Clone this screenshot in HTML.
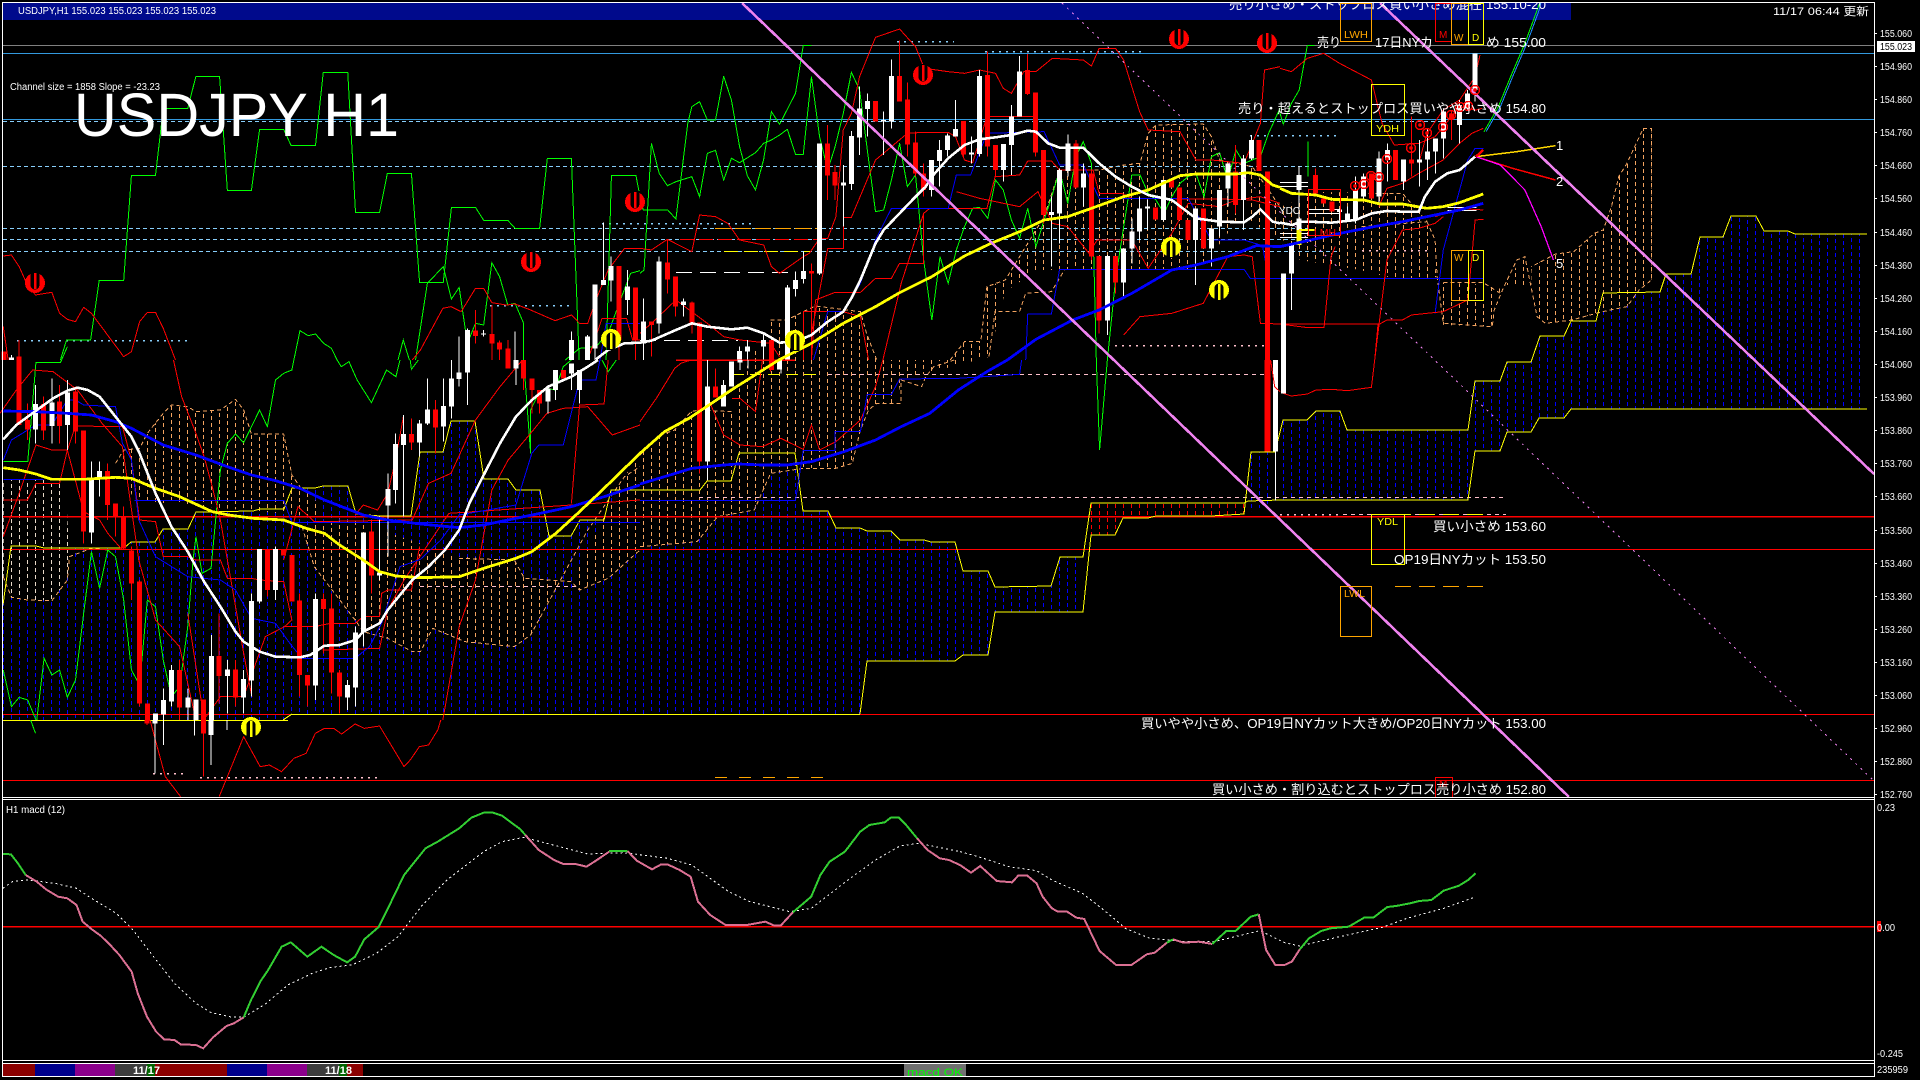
<!DOCTYPE html>
<html><head><meta charset="utf-8"><style>
html,body{margin:0;padding:0;background:#000;width:1920px;height:1080px;overflow:hidden}
svg{display:block;position:absolute;left:0;top:0}
svg *{vector-effect:non-scaling-stroke;shape-rendering:crispEdges}
.n{fill:none}
.g{fill:none;stroke:#0f0;stroke-width:1}
.r{fill:none;stroke:#f00;stroke-width:1}
.b{fill:none;stroke:#00f;stroke-width:1}
.y{fill:none;stroke:#ff0;stroke-width:1}
.w{fill:none;stroke:#fff;stroke-width:1}
.wb{fill:none;stroke:#fff;stroke-width:5}
.rb{fill:none;stroke:#f00;stroke-width:5}
.p{fill:none;stroke:#f4a460;stroke-width:1;stroke-dasharray:4 3}
.ma1{fill:none;stroke:#fff;stroke-width:2.6}
.ma2{fill:none;stroke:#ff0;stroke-width:2.8}
.ma3{fill:none;stroke:#00f;stroke-width:2.8}
.pk{fill:none;stroke:#db7093;stroke-width:2}
.gr{fill:none;stroke:#32cd32;stroke-width:2}
.dt{fill:none;stroke:#fff;stroke-width:1;stroke-dasharray:2 3}
text{font-family:"Liberation Sans","Noto Sans CJK JP",sans-serif;fill:#fff}
.j{font-size:13px}
.a{font-size:10px}
</style></head><body>
<svg width="1920" height="1080" viewBox="0 0 1920 1080" xmlns="http://www.w3.org/2000/svg">
<defs>
<pattern id="pb" patternUnits="userSpaceOnUse" x="3" y="0" width="24" height="7"><rect width="1" height="4" fill="#0000ff"/><rect x="8" y="1" width="1" height="4" fill="#0000ff"/><rect x="16" y="3" width="1" height="4" fill="#0000ff"/></pattern>
<pattern id="pp" patternUnits="userSpaceOnUse" x="3" y="0" width="24" height="7"><rect width="1" height="4" fill="#f4a460"/><rect x="8" y="1" width="1" height="4" fill="#f4a460"/><rect x="16" y="3" width="1" height="4" fill="#f4a460"/></pattern>
<pattern id="pw" patternUnits="userSpaceOnUse" x="3" y="0" width="24" height="7"><rect width="1" height="4" fill="#e8d8c8"/><rect x="8" y="1" width="1" height="4" fill="#e8d8c8"/><rect x="16" y="3" width="1" height="4" fill="#e8d8c8"/></pattern>
<pattern id="pr" patternUnits="userSpaceOnUse" x="3" y="0" width="8" height="7"><rect width="1" height="4" fill="#ff0000"/></pattern>
<clipPath id="c1"><polygon points="3,605 11,546 36,546 44,548 124,548 131,542 155,542 163,529 188,529 196,512 253,511 260,509 284,509 292,488 315,488 323,486 348,486 356,514 380,516 411,516 420,452 443,452 451,421 475,421 484,479 508,479 516,490 540,490 549,536 571,536 580,520 604,520 611,490 700,490 707,481 731,481 739,453 795,453 803,511 828,511 836,528 860,528 867,531 891,531 900,540 924,540 931,542 955,542 963,571 988,571 995,587 1051,586 1060,557 1083,557 1083,612 995,612 988,655 963,655 955,661 867,661 860,714 292,714 283,720 3,720"/></clipPath>
<clipPath id="c2"><polygon points="1244,514 1251,452 1275,452 1280,432 1283,420 1307,420 1316,411 1340,411 1347,430 1468,430 1475,381 1500,381 1507,362 1531,362 1540,336 1564,336 1571,321 1596,321 1603,293 1660,292 1666,274 1691,274 1700,237 1723,237 1731,216 1756,216 1764,231 1788,231 1795,234 1867,234 1867,409 1571,409 1564,418 1539,418 1531,432 1507,432 1500,451 1475,451 1468,500 1280,500"/></clipPath>
<clipPath id="c3"><polygon points="1091,503 1244,503 1244,514 1211,516 1156,516 1148,518 1123,518 1115,535 1091,535"/></clipPath>
<clipPath id="c4">
<polygon transform="translate(0,360) scale(.40816,.33333)" points="283,310 303,270 342,265 361,220 400,160 420,135 460,140 480,155 540,150 577,118 597,150 616,222 695,222 715,345 735,380 773,421 792,475 870,480 330,421"/>
<polygon transform="translate(0,360) scale(.40816,.33333)" points="740,500 860,480 1125,590 1260,600 1285,655 1375,665 1360,690 1300,825 1260,860 1140,845 1060,805 1030,875 1010,875 950,835 870,780 820,700 770,620"/>
<polygon points="624,477 640,455 660,435 675,430 691,412 699,410 732,412 745,370 771,320 787,320 803,312 815,306 852,312 866,333 877,360 950,360 964,342 981,342 987,287 1005,280 1020,257 1044,217 1060,170 1099,170 1124,165 1140,163 1148,133 1156,125 1203,124 1211,137 1220,160 1252,167 1280,207 1321,192 1402,193 1427,220 1437,277 1400,280 1360,270 1300,260 1283,240 1240,217 1200,270 1150,270 1100,270 1060,270 1037,270 1005,292 989,357 901,380 897,403 877,403 869,410 860,430 852,463 836,468 803,468 771,473 754,510 718,517 697,542 640,547 608,578 580,590 571,582"/>
<polygon transform="translate(1280,0) scale(.40816,.33333)" points="616,800 675,762 720,755 770,700 792,690 812,620 830,530 850,490 890,385 910,385 910,840 880,870 850,920 792,935 715,960 650,970 630,950"/>
<polygon transform="translate(1280,0) scale(.40816,.33333)" points="400,848 520,855 545,870 560,830 598,772 616,800 616,855 545,855 525,930 518,980 400,975 385,830"/>
</clipPath>
<clipPath id="c5"><polygon transform="translate(0,360) scale(.40816,.33333)" points="8,360 160,360 170,590 165,660 127,722 67,720 28,712 8,650"/></clipPath>
<g id="dn"><circle r="10" fill="#f00"/><path d="M-4.5-11V2A4.5 4.5 0 0 0 4.500 2V-11Z" fill="#000"/><path d="M0-10V6" stroke="#f00" stroke-width="2.500" fill="none"/></g>
<g id="up"><circle r="10" fill="#ff0"/><path d="M-4.5 11V-2A4.5 4.5 0 0 1 4.500-2V11Z" fill="#000"/><path d="M0 10V-6" stroke="#ff0" stroke-width="2.500" fill="none"/></g>
<g id="ring"><circle r="4.500" fill="none" stroke="#f00" stroke-width="1.500"/><circle r="1.800" fill="#f00"/></g>
</defs>
<rect width="1920" height="1080" fill="#000"/>
<rect x="3" y="3" width="1568" height="17" fill="#000a8c"/>
<!-- clouds -->
<rect x="0" y="0" width="1880" height="800" fill="url(#pb)" clip-path="url(#c1)"/>
<rect x="0" y="0" width="1880" height="800" fill="url(#pb)" clip-path="url(#c2)"/>
<rect x="0" y="0" width="1880" height="800" fill="url(#pr)" clip-path="url(#c3)"/>
<rect x="0" y="0" width="1880" height="800" fill="url(#pp)" clip-path="url(#c4)"/>
<rect x="0" y="0" width="1880" height="800" fill="url(#pw)" clip-path="url(#c5)"/>
<!-- peach contours -->
<g transform="translate(0,360) scale(.40816,.33333)">
<polyline class="p" points="283,310 303,270 342,265 361,220 400,160 420,135 460,140 480,155 540,150 577,118 597,150 616,222 695,222 715,345 735,380"/>
<polyline class="p" points="8,650 28,712 67,720 127,722 165,660 170,590 224,565 264,570"/>
<polyline class="p" points="740,500 770,620 820,700 870,780 890,815 950,835 1010,875 1030,875 1060,805 1140,845 1260,860 1300,825 1360,690 1440,510 1530,350 1568,320"/>
<polyline class="p" points="1125,595 1260,600 1285,655 1400,665 1420,690 1490,655 1568,570"/>
</g>
<g transform="translate(640,360) scale(.40816,.33333)">
<polyline class="p" points="0,285 50,225 85,210 125,155 145,150 225,155"/>
<polyline class="p" points="0,560 140,545 190,470 280,450 320,340 400,325 480,325 520,310 540,210 560,150 580,130 640,130 640,60 690,80 700,50 720,20 770,0"/>
</g>
<g transform="translate(640,0) scale(.40816,.33333)">
<polyline class="p" points="320,960 360,960 400,935 430,918 540,935 555,1000 580,1080"/>
<polyline class="p" points="760,1080 795,1025 835,1025 850,860 895,840 930,770 990,650 1028,510 1125,510 1185,495 1225,490 1245,400 1264,375 1380,372 1400,410 1420,480 1500,500 1568,620"/>
<polyline class="p" points="855,1070 870,935 930,935 945,880 1008,875 1040,810"/>
</g>
<g transform="translate(1280,0) scale(.40816,.33333)">
<polyline class="p" points="360,665 380,720 385,830 400,970 520,980 525,930 545,870 580,780 600,770 630,950 650,970 715,960 790,935 850,920 880,870 910,840 910,385 890,385 850,490 830,530 812,620 792,690 770,700 720,755 675,762 616,800"/>
<polyline class="p" points="400,848 498,848 540,880"/>
<polyline class="p" points="200,580 300,580 360,665"/>
<polyline class="p" points="200,680 360,665"/>
</g>
<!-- horizontal levels -->
<path d="M3 45.500H1874" stroke="#808080" fill="none"/>
<path d="M3 53.500H1874M3 119.500H1874" stroke="#3399dd" fill="none"/>
<path d="M3 121.500H1443M3 166.500H1382M3 228.500H1310M3 239.500H1308M3 251.500H1337" stroke="#87cefa" stroke-dasharray="4 3" fill="none"/>
<path d="M1250 135.500H1340M17 340.500H187M490 305.500H571M897 41.500H954M985 51.500H1146M602 223.500H754" stroke="#87cefa" stroke-width="1.500" stroke-dasharray="2 5" fill="none"/>
<path d="M3 516.500H1874" stroke="#f00" stroke-width="1.500" fill="none"/>
<path d="M3 549.500H1874M3 714.500H290M860 714.500H1874M3 780.500H1874" stroke="#f00" fill="none"/>
<path d="M715 228.500H820" stroke="#ffa500" stroke-dasharray="16 4" fill="none"/>
<path d="M680 239.500H820" stroke="#f00" stroke-dasharray="14 5" fill="none"/>
<path d="M724 251.500H811" stroke="#ff0" stroke-dasharray="14 6" fill="none"/>
<path d="M676 272.500H789" stroke="#fff" stroke-dasharray="16 8" fill="none"/>
<path d="M640 340.500H738" stroke="#fff" stroke-dasharray="16 8" fill="none"/>
<path d="M1115 345.500H1264M1362 250.500H1427" stroke="#ffc0cb" stroke-width="1.500" stroke-dasharray="2 5" fill="none"/>
<path d="M732 374.500H820" stroke="#ff0" stroke-dasharray="12 6" fill="none"/>
<path d="M828 374.500H1264M699 497.500H1506M1343 514.500H1506M420 586.500H580" stroke="#ffc0cb" stroke-dasharray="4 4" fill="none"/>
<path d="M1280 514.500H1340" stroke="#ffc0cb" stroke-width="1.500" stroke-dasharray="2 5" fill="none"/>
<path d="M153 773.500H187M200 777.500H380" stroke="#ffc0cb" stroke-width="1.500" stroke-dasharray="2 5" fill="none"/>
<path d="M715 777.500H827" stroke="#ffa500" stroke-dasharray="12 12" fill="none"/>
<path d="M1395 586.500H1483" stroke="#ffa500" stroke-dasharray="16 8" fill="none"/>
<path d="M1371 514.500H1483" stroke="#ff0" stroke-dasharray="16 8" fill="none"/>
<path d="M288 720.500H3" stroke="#ff0" fill="none"/>
<path d="M292 714.500H860" stroke="#ff0" stroke-width="1" fill="none"/>
<!-- ichimoku span lines -->
<polyline class="y" points="3,605 11,546 36,546 44,548 124,548 131,542 155,542 163,529 188,529 196,512 253,511 260,509 284,509 292,488 315,488 323,486 348,486 356,514 380,516 411,516 420,452 443,452 451,421 475,421 484,479 508,479 516,490 540,490 549,536 571,536 580,520 604,520 611,490 700,490 707,481 731,481 739,453 795,453 803,511 828,511 836,528 860,528 867,531 891,531 900,540 924,540 931,542 955,542 963,571 988,571 995,587 1051,586 1060,557 1083,557 1091,503 1244,503 1248,501 1280,500 1468,500 1475,451 1500,451 1507,432 1531,432 1539,418 1564,418 1571,409 1867,409"/>
<polyline class="y" points="860,714 867,661 955,661 963,655 988,655 995,612 1083,612 1091,535 1115,535 1123,518 1148,518 1156,516 1211,516 1244,514 1251,452 1275,452 1280,432 1283,420 1307,420 1316,411 1340,411 1347,430 1468,430 1475,381 1500,381 1507,362 1531,362 1540,336 1564,336 1571,321 1596,321 1603,293 1660,292 1666,274 1691,274 1700,237 1723,237 1731,216 1756,216 1764,231 1788,231 1795,234 1867,234"/>
<polyline class="y" points="283,720 292,714"/>
<!-- Zone 1 -->
<g transform="scale(.40816,.33333)">
<polyline class="g" points="148,1080 163,1020 222,1020 243,842 303,842 322,526 381,526 400,325 460,325 480,229 538,229 557,571 616,571 636,388 695,388 713,436 773,436 792,217 852,217 871,637 930,637 949,520 1008,520 1028,847 1086,847 1106,622 1165,622 1185,661 1244,661 1262,685 1322,685 1341,475 1400,475 1419,1080"/>
<polyline class="g" points="1485,1080 1498,526 1558,526 1568,590"/>
<polyline class="g" points="720,1080 735,992 755,1007 773,1002 793,1030 812,1045 826,1080"/>
<polyline class="g" points="975,1080 988,1020 1003,1080"/>
<polyline class="g" points="1018,1080 1047,850 1086,800 1106,897 1125,862 1145,1030 1165,970 1185,975 1205,788 1224,830 1244,915 1262,910 1283,970 1283,1080"/>
<polyline class="g" points="1385,1080 1420,1045 1460,1040 1490,1000 1520,900 1545,820 1568,812"/>
<polyline class="r" points="8,768 28,765 47,800 67,855 87,885 127,877 146,940 165,958 185,965 205,922 224,940 303,1070 322,1055 342,965 361,937 381,937 400,985 430,1080"/>
<polyline class="r" points="1010,1080 1030,1050 1085,925 1105,920 1130,935 1165,865 1185,865 1205,908 1240,915 1262,912 1300,930 1360,962 1400,945 1420,970 1440,970 1460,900 1490,810 1530,745 1568,745"/>
<polyline class="r" points="8,980 20,1080"/>
<polyline class="r" points="1440,1080 1475,955 1535,955 1550,1020 1568,1020"/>
<polyline class="b" points="1470,1080 1485,970 1568,970"/>
<path class="w" d="M1125 1010V1080M1262 995V1080M1400 995V1080M1439 1005V1080M1458 853V1080M1478 668V855M1497 770V905M1537 810V945M1145 985V1080M1185 990V1010M28 1065V1080"/>
<path class="wb" d="M1145 990V1080M1400 1020V1080M1439 1010V1080M1458 853V1045M1478 840V855M1497 798V842M1537 860V900M1185 1000V1004M28 1072V1080"/>
<path class="r" d="M1165 930V1030M1205 915V1080M1224 1022V1080M1244 1020V1080M1517 798V1080M1557 862V1080M47 1020V1080"/>
<path class="rb" d="M1165 992V1008M1205 1002V1030M1224 1028V1048M1244 1045V1080M1517 798V1020M1557 862V1020M47 1070V1080M10 1055V1080"/>
</g>
<!-- Zone 2 -->
<g transform="translate(640,0) scale(.40816,.33333)">
<polyline class="g" points="0,590 8,630 68,630 88,657 117,370 127,320 146,305 165,360 185,360 205,229 224,300 244,440 263,527 283,570 303,478 322,335 342,373 381,280 400,136 420,136"/>
<polyline class="g" points="0,820 10,810 28,430 47,520 67,557 88,545 127,530 146,590 165,460 185,451 205,540 224,475 244,488 283,458 303,430 322,420 342,405 361,388 381,463 400,463 420,230 440,410 460,510 478,440 498,340 518,217 538,270 558,460 577,635 597,630 616,540 636,430 655,560 675,525 695,780 715,960 735,770 755,850 775,750 795,680 815,625 832,622 852,655 871,540 890,570 910,660 930,715 950,625 970,740 990,660 1010,585 1028,510 1048,610 1068,470 1086,425 1106,490 1118,1080"/>
<polyline class="g" points="1145,1080 1165,840 1185,680 1205,525 1225,525 1245,580 1264,600 1284,640 1303,590 1323,550 1343,530 1362,520 1382,590 1400,470 1420,458 1440,540 1460,450 1480,490 1500,480 1520,470 1540,400 1568,325"/>
<polyline class="r" points="0,745 28,750 67,718 127,755 146,645 185,650 215,670 244,720 303,735 322,800 342,820 400,770 415,760 440,715 460,715 480,650 498,390 518,340 538,230 577,112 636,87 675,140 695,200 715,208 755,215 795,220 832,210 871,220 890,265 910,280 940,215 970,215 1010,175 1086,180 1106,198 1125,145 1165,145 1185,180 1205,260 1224,335 1245,390 1323,395 1362,480 1400,480 1480,490 1520,370 1530,210 1568,200"/>
<polyline class="r" points="595,1080 640,850 695,640 710,625 850,625 870,530 930,525 950,483 1008,483 1028,510 1110,510 1125,580 1180,580 1205,595 1460,598 1500,600 1568,620"/>
<polyline class="r" points="420,1080 430,900 478,877 540,877 577,835 616,835 636,790 695,790 695,640"/>
<polyline class="r" points="420,1000 460,745 498,745 498,652 518,652 577,480 616,440 655,400 695,397 755,397 773,410 795,480 815,488 850,350 965,350"/>
<polyline class="r" points="400,1080 400,935 498,935 540,950 560,1080"/>
<polyline class="r" points="0,1000 28,970 88,900 165,970 205,1010 245,1020 320,1030 342,1070"/>
<polyline class="r" points="775,575 832,595 871,605 930,620 975,575 1010,670 1048,680 1100,760 1120,720 1205,720 1245,805 1303,700 1343,610 1420,620 1460,600 1520,590 1568,610"/>
<polyline class="r" points="1185,1005 1225,950 1303,940 1380,910 1440,770 1480,765 1500,770 1520,970 1568,972"/>
<polyline class="b" points="425,1080 460,935 498,935 540,850 577,720 616,625 755,625 775,525 810,525 850,400 990,395 1028,495 1086,495 1125,595 1343,595 1400,720 1480,720 1525,737 1540,835 1568,835"/>
<polyline class="b" points="945,1080 950,942 1008,942 1028,808 1480,808 1495,835 1568,835"/>
<path class="w" d="M8 895V1080M47 770V1000M107 895V950M244 1040V1080M263 1020V1080M303 1000V1080M361 855V1080M381 815V890M400 755V850M440 430V825M498 495V680M518 393V570M538 260V465M557 280V410M597 335V465M616 178V385M714 480V590M734 420V560M753 400V470M773 300V410M812 410V490M832 210V470M890 432V545M910 315V525M930 168V350M1008 590V800M1028 505V730M1048 403V530M1087 490V620M1145 765V1005M1184 745V890M1205 655V790M1224 590V720M1243 600V690M1282 540V665M1361 625V855M1400 685V800M1420 570V710M1440 490V620M1478 465V690M1498 405V480"/>
<path class="wb" d="M8 965V1030M47 785V970M107 905V915M244 1053V1080M263 1040V1055M303 1020V1040M361 863V1080M381 840V867M400 813V837M440 430V820M498 547V557M518 408V552M538 325V413M557 303V327M597 360V365M616 228V364M714 480V570M734 450V483M753 407V450M773 387V410M812 458V463M832 228V462M890 432V510M910 350V435M930 215V350M1008 636V645M1028 510V640M1048 430V513M1087 520V563M1145 768V962M1184 745V848M1205 695V745M1224 625V695M1243 620V625M1282 540V660M1361 625V720M1400 685V745M1420 570V680M1440 490V565M1478 475V600M1498 420V475"/>
<path class="r" d="M28 965V1070M67 720V880M87 830V950M127 905V1000M420 790V1080M459 375V600M478 495V600M636 122V305M655 247V470M675 395V530M695 490V590M792 363V470M851 155V470M871 435V530M949 162V285M969 277V470M989 450V670M1068 420V565M1106 510V780M1125 768V1000M1165 768V880M1459 435V640"/>
<path class="rb" d="M28 965V975M67 787V838M87 830V920M127 908V970M146 968V1080M322 1020V1080M420 813V821M459 430V527M478 516V557M577 303V365M636 228V305M655 298V433M675 427V520M695 520V570M792 363V463M851 225V440M871 435V510M949 210V282M969 277V457M989 450V645M1068 430V562M1106 520V770M1125 768V962M1165 768V848M1263 622V658M1302 535V562M1322 562V660M1342 660V720M1381 625V745M1459 515V615M1517 420V513M1537 515V1080"/>
</g>
<!-- Zone 3 -->
<g transform="translate(1280,0) scale(.40816,.33333)">
<polyline class="g" points="0,340 8,372 28,310 47,270 67,136 85,136"/>
<path class="g" d="M68 425V530"/>
<polyline class="g" points="500,395 535,320 565,230 600,130 630,30 637,5"/>
<polyline points="505,395 540,320 570,230 605,130 635,30 640,5" fill="none" stroke="#1e90ff"/>
<polyline class="b" points="380,940 400,750 460,480 478,445 498,445"/>
<path class="b" d="M0 835H498"/>
<polyline class="r" points="0,205 28,215 67,175 107,160 146,190 224,240 250,370 280,435 340,430 380,410 400,380 440,320 480,330 495,325"/>
<polyline class="r" points="242,620 262,565 300,550 340,520 400,480 440,430 470,400 498,385"/>
<polyline class="r" points="340,490 360,400 400,330 440,300 478,230 490,165"/>
<polyline class="r" points="0,972 62,982 108,982 125,770 135,740"/>
<path class="r" d="M0 972H242"/>
<polyline class="r" points="232,1080 240,975 262,960 300,960 322,945 360,940 400,935 460,900 470,770 478,660 498,658"/>
<polyline class="r" points="380,650 440,625 498,630"/>
<polyline class="r" points="232,1080 262,780 300,690 340,685 380,670 400,650"/>
<polyline points="480,470 580,455 675,437" fill="none" stroke="#ffd700" stroke-width="1.500"/>
<polyline points="480,470 570,505 675,540" fill="none" stroke="#f00" stroke-width="1.500"/>
<polyline points="480,470 540,495 600,570 640,680 670,780" fill="none" stroke="#f0f" stroke-width="1.300"/>
<polyline points="480,470 498,450" fill="none" stroke="#f00" stroke-width="2.500"/>
<path d="M0 548H68M0 560H68M68 628H146M68 640H146M0 700H68M0 712H68M410 622H482M410 632H482" stroke="#fff" fill="none"/>
<path class="w" d="M8 820V1080M28 735V930M47 498V735M146 625V660M165 620V665M185 530V670M205 520V600M243 455V610M263 430V545M302 478V570M342 420V560M361 385V540M381 415V520M400 325V475M440 300V430M459 270V330M478 160V305"/>
<path class="wb" d="M8 820V1080M28 735V820M47 525V570M47 655V700M146 628V636M165 640V660M185 570V660M205 530V590M243 475V590M263 450V480M302 478V545M342 478V488M361 455V478M381 415V455M400 335V415M440 315V375M459 280V325M478 160V270"/>
<path class="r" d="M87 505V580M322 350V530M420 330V420"/>
<path class="rb" d="M87 525V580M107 595V610M127 605V635M224 520V595M283 450V540M322 478V490M420 340V357"/>
<path d="M47 690V735" stroke="#ff0" stroke-width="5" fill="none"/>
<path d="M47 690H85" stroke="#ff0" stroke-width="2" fill="none"/>
</g>
<!-- Zone 4 -->
<g transform="translate(0,360) scale(.40816,.33333)">
<polyline class="g" points="8,305 68,305 88,8 148,8 165,-40"/>
<polyline class="g" points="8,930 28,1040 47,1012 68,1020 88,1080"/>
<polyline class="g" points="90,1080 108,895 127,945 146,930 165,1012 185,960 205,760 224,575 244,685 264,570 283,590 303,720 322,930 342,975 361,720 381,740 400,900 420,1010 440,980 460,800 473,600 480,530 495,640 517,625 540,330 557,250 577,222 597,248 636,150 655,200 675,60 695,40 715,30 720,0"/>
<polyline class="g" points="826,0 836,20 855,5 875,60 910,128 947,30 970,50 980,0"/>
<polyline class="g" points="1005,0 1008,28 1025,0"/>
<polyline class="g" points="1283,0 1300,280 1300,150 1320,100 1340,85 1360,90 1380,20 1400,0"/>
<polyline class="g" points="1475,0 1490,35 1510,0"/>
<polyline class="r" points="425,0 445,110 480,220 500,290 520,380 540,480 560,620 597,880 617,1010"/>
<polyline class="r" points="8,530 47,400 88,255 127,270 165,270 205,455 244,480 264,520 300,570"/>
<polyline class="r" points="8,420 67,420 88,370 146,370 165,270 185,198 300,200 322,300 342,480 381,485 400,590 460,590 480,600 540,600 557,655 616,655 636,660 695,665 715,780 697,800 770,800 810,790 870,790 890,770 930,770 935,700 950,690 1008,690 1028,560"/>
<polyline class="r" points="300,260 340,600 381,780 440,860 480,1080"/>
<polyline class="r" points="460,760 500,1078 540,1010 597,1010 650,830 697,800"/>
<polyline class="r" points="1085,1080 1125,800 1165,660 1205,390 1245,300 1300,220 1340,160 1380,145 1440,140 1500,225 1568,195"/>
<polyline class="r" points="1400,430 1420,135 1480,132 1490,0"/>
<polyline class="r" points="870,465 890,435 925,450 950,400 969,300 989,165"/>
<polyline class="r" points="695,600 730,440 770,485 1010,480 1050,370 1105,340 1165,180 1225,80 1280,0"/>
<polyline class="r" points="0,160 40,90 80,30 130,35 190,90 250,190 300,260"/>
<polyline class="r" points="790,870 930,865 950,750 990,660 1100,460 1400,435 1568,420"/>
<polyline class="b" points="8,300 28,240 88,195 127,195 165,120 185,120 205,135 283,140 300,250 322,300 340,480 381,590 460,650 540,660 577,690 616,775 675,790 710,850 740,895 870,895 905,860 935,790 980,620 1030,598 1080,540 1125,465 1264,435 1303,280 1320,255 1380,255 1420,60 1460,60 1470,0"/>
<path class="b" d="M8 358H107M330 421H695M715 488H1568"/>
<polyline class="b" points="695,420 715,488"/>
<path class="w" d="M87 75V250M127 55V250M165 60V270M224 305V550M244 305V410M400 985V1080M420 915V1040M460 985V1080M518 825V1080M557 900V1060M597 930V1060M616 700V1010M636 567V730M675 560V720M773 700V1020M851 960V1050M871 800V1040M891 517V860M930 470V660M950 340V590M969 220V430M989 165V470M1028 180V290M1047 55V195M1087 55V245M1106 0V175M1125 0V80M1145 0V135M1264 0V75M1342 85V160M1361 30V120M1400 10V90M1420 30V130"/>
<path d="M224 360V518M400 1020V1063M420 930V1025M460 1012V1043M518 888V1080M557 928V948M597 957V1012M616 723V962M636 567V725M675 567V690M773 717V977M851 975V1012M871 817V982M891 517V817M930 637V647M950 387V437M969 252V390M989 222V255M1028 190V248M1047 148V190M1087 138V200M1106 55V140M1125 37V57M1145 0V38M1264 0V25M1342 85V125M1361 30V90M1400 10V40M1420 30V90M87 132V208M127 128V198M165 98V195M244 333V358M381 1060V1080M480 1018V1080" stroke="#fff" stroke-width="5" fill="none"/>
<path class="r" d="M47 0V195M67 130V240M107 110V240M146 75V250M185 80V250M205 212V550M263 310V480M283 430V530M303 440V570M322 560V720M342 660V1040M440 900V1080M537 760V1030M577 900V1040M655 567V710M734 700V1010M753 945V1040M792 700V880M812 700V1000M832 930V1060M910 480V700M1008 175V270M1067 120V280M1245 0V25M1283 0V90M1303 55V160M1322 90V160M1381 30V55"/>
<path class="rb" d="M47 0V195M67 180V208M107 132V212M146 125V198M185 95V215M205 212V515M263 333V435M283 430V473M303 473V565M322 572V670M342 665V1030M361 1030V1080M440 930V1043M498 1018V1080M537 888V948M577 928V1012M655 567V690M695 567V587M715 585V725M734 722V945M753 945V977M792 717V747M812 745V938M832 937V1010M910 515V647M1008 222V248M1067 148V202M1245 0V25M1283 0V55M1303 55V90M1322 90V130M1381 30V55"/>
</g>
<!-- Zone 5 -->
<g transform="translate(640,360) scale(.40816,.33333)">
<polyline class="g" points="1118,0 1126,270 1145,0"/>
<polyline class="r" points="0,185 40,115 85,25 100,10 125,0"/>
<polyline class="r" points="165,110 205,225 245,255 300,260 345,235 400,268 420,195 440,270 480,245 540,180 577,80 595,0"/>
<polyline class="r" points="225,115 245,115 283,155 300,0"/>
<path d="M88 0H380" stroke="#f00" stroke-width="1.500" fill="none"/>
<polyline class="b" points="0,421 381,421 400,272 478,272 478,215 540,215 557,103 616,103 636,57 780,55 930,43 935,0"/>
<path class="w" d="M165 0V360M205 60V140M245 0V30M265 0V25M345 0V40"/>
<path class="wb" d="M165 80V305M205 75V140M224 5V80M245 0V8M342 0V28"/>
<path class="r" d="M146 0V340M185 25V112M320 0V35"/>
<path class="rb" d="M146 0V305M185 80V112M322 0V30"/>
<path d="M1537 0V275" stroke="#f00" stroke-width="6" fill="none"/>
<path class="wb" d="M1557 0V275"/>
<path class="w" d="M1557 275V420"/>
<polyline class="r" points="1545,0 1555,80 1568,95"/>
</g>
<!-- Zone 6 small -->
<g transform="translate(1280,360) scale(.40816,.33333)">
<polyline class="r" points="8,100 28,108 67,102 88,90 127,88 165,92 224,82 232,0"/>
<path class="wb" d="M8 0V100"/>
</g>
<!-- Zone 7 red under -->
<g transform="translate(0,720) scale(.61224,.33333)">
<polyline class="g" points="50,0 58,40"/>
<polyline class="r" points="245,0 270,170 295,230"/>
<polyline class="r" points="358,230 398,50 425,140 440,135 460,155 480,115 500,100 515,40 530,25 545,25 558,42 580,12 595,25 620,18 660,140 670,120 685,80 700,75 715,30 720,0"/>
<path class="w" d="M253 0V160M267 0V75M318 0V47M345 0V135M371 0V30"/>
<path class="wb" d="M253 0V10M345 0V45"/>
<path class="r" d="M332 0V170M240 0V15"/>
<path class="rb" d="M332 0V40M240 0V10"/>
</g>
<!-- Moving averages -->
<g transform="translate(0,360) scale(.40816,.33333)">
<polyline class="ma3" points="8,153 88,155 165,160 224,165 283,185 322,205 400,255 480,285 557,320 616,345 675,362 735,385 795,420 890,465 950,480 1030,492 1125,503 1185,495 1264,475 1343,455 1400,440 1480,410 1568,375"/>
<polyline class="ma2" points="8,323 47,330 88,342 127,358 205,358 283,352 322,355 381,385 440,410 520,455 560,465 620,475 695,480 750,505 795,520 832,555 890,600 930,635 970,648 1030,653 1125,650 1185,625 1264,595 1303,575 1362,520 1420,455 1480,385 1568,280"/>
<polyline class="ma1" points="8,238 40,195 85,155 130,115 165,92 190,83 215,90 244,110 283,170 322,230 342,280 381,400 420,500 460,575 500,665 540,740 577,815 597,845 636,875 675,890 735,892 760,885 795,857 832,855 871,840 890,815 930,790 950,750 1010,660 1050,620 1090,570 1125,510 1150,430 1185,345 1225,250 1264,170 1303,120 1343,80 1400,50 1440,20 1465,0"/>
</g>
<g transform="scale(.40816,.33333)"><polyline class="ma1" points="1460,1078 1490,1050 1530,1030 1568,1028"/></g>
<g transform="translate(640,360) scale(.40816,.33333)">
<polyline class="ma3" points="0,372 60,350 127,325 205,315 240,312 300,315 360,315 420,305 500,275 577,240 640,200 710,160 780,90 850,35 900,0"/>
<polyline class="ma2" points="0,280 60,215 120,175 230,85 340,0"/>
</g>
<g transform="translate(640,0) scale(.40816,.33333)">
<polyline class="ma3" points="900,1080 970,1018 1060,960 1125,930 1205,880 1303,810 1362,795 1440,770 1510,737 1568,740"/>
<polyline class="ma2" points="340,1080 420,1030 498,970 577,920 636,878 715,830 795,768 860,730 930,695 990,660 1048,650 1106,625 1185,590 1245,570 1323,527 1362,522 1460,522 1490,518 1520,525 1550,555 1568,562"/>
<polyline class="ma1" points="0,1028 28,1022 88,990 127,970 165,980 224,988 263,983 303,1000 342,1028 381,1025 420,1005 460,965 498,935 520,890 540,840 577,730 597,690 636,640 675,590 700,560 715,530 755,475 795,435 832,418 871,412 910,405 950,392 970,395 1000,430 1028,443 1086,443 1125,490 1165,530 1205,560 1245,585 1303,600 1362,655 1420,665 1480,667 1500,650 1520,628 1550,665 1568,670"/>
</g>
<g transform="translate(1280,0) scale(.40816,.33333)">
<polyline class="ma3" points="0,740 68,722 147,700 230,680 300,665 360,650 440,630 498,610"/>
<polyline class="ma2" points="0,565 28,580 88,585 127,598 205,600 245,612 300,612 360,625 400,620 440,608 480,590 498,582"/>
<polyline class="ma1" points="0,668 30,675 50,665 70,665 127,668 185,660 225,640 262,633 300,635 340,635 355,590 380,545 410,520 440,510 478,470"/>
</g>
<!-- Trend lines -->
<path d="M742 3L1569 797M1380 3L1874 474" stroke="#ee82ee" stroke-width="2.600" fill="none"/>
<path d="M1062 3L1874 781" stroke="#ee82ee" stroke-dasharray="2 5" fill="none"/>
<!-- Markers -->
<use href="#dn" x="35" y="283"/><use href="#dn" x="531" y="262"/><use href="#dn" x="635" y="202"/><use href="#dn" x="923" y="75"/><use href="#dn" x="1179" y="39"/><use href="#dn" x="1267" y="43"/>
<use href="#up" x="611" y="339"/><use href="#up" x="795" y="340"/><use href="#up" x="1171" y="247"/><use href="#up" x="1219" y="290"/><use href="#up" x="251" y="727"/>
<use href="#ring" x="1355" y="186"/><use href="#ring" x="1364" y="184"/><use href="#ring" x="1371" y="176"/><use href="#ring" x="1379" y="177"/><use href="#ring" x="1387" y="159"/><use href="#ring" x="1411" y="148"/><use href="#ring" x="1420" y="125"/><use href="#ring" x="1427" y="133"/><use href="#ring" x="1443" y="127"/><use href="#ring" x="1451" y="115"/><use href="#ring" x="1460" y="107"/><use href="#ring" x="1468" y="106"/><use href="#ring" x="1475" y="90"/>
<!-- top clipped text -->
<text class="j" x="1229" y="9" textLength="317" lengthAdjust="spacingAndGlyphs">売り小さめ・ストップロス買い小さめ混在 155.10-20</text>
<rect x="0" y="0" width="1920" height="3" fill="#000"/>
<!-- Labels -->
<text class="j" x="1238" y="113" textLength="308" lengthAdjust="spacingAndGlyphs">売り・超えるとストップロス買いやや小さめ 154.80</text>
<text class="j" x="1317" y="47" textLength="24" lengthAdjust="spacingAndGlyphs">売り</text>
<text class="j" x="1375" y="47" textLength="58" lengthAdjust="spacingAndGlyphs">17日NYカ</text>
<text class="j" x="1486" y="47" textLength="60" lengthAdjust="spacingAndGlyphs">め 155.00</text>
<!-- Boxes -->
<g fill="none" shape-rendering="crispEdges">
<rect x="1340.500" y="3.500" width="31" height="38" stroke="#ffa500"/>
<rect x="1435.500" y="3.500" width="16" height="38" stroke="#f00"/>
<rect x="1451.500" y="3.500" width="17" height="41" stroke="#ffa500"/>
<rect x="1468.500" y="3.500" width="15" height="41" stroke="#ff0"/>
<rect x="1371.500" y="84.500" width="33" height="51" stroke="#ff0"/>
<rect x="1451.500" y="250.500" width="17" height="50" stroke="#ffa500"/>
<rect x="1468.500" y="250.500" width="15" height="50" stroke="#ff0"/>
<rect x="1308.500" y="189.500" width="32" height="46" stroke="#f00"/>
<rect x="1371.500" y="514.500" width="33" height="50" stroke="#ff0"/>
<rect x="1340.500" y="586.500" width="31" height="50" stroke="#ffa500"/>
<rect x="1435.500" y="777.500" width="17" height="20" stroke="#f00"/>
</g>
<g font-size="10">
<text x="1344" y="38" textLength="24" lengthAdjust="spacingAndGlyphs" style="fill:#ffa500">LWH</text>
<text x="1439" y="38" style="fill:#f00">M</text>
<text x="1454" y="41" style="fill:#ffa500">W</text>
<text x="1472" y="41" style="fill:#ff0">D</text>
<text x="1376" y="132" textLength="23" lengthAdjust="spacingAndGlyphs" style="fill:#ff0">YDH</text>
<text x="1454" y="261" style="fill:#ffa500">W</text>
<text x="1472" y="261" style="fill:#ff0">D</text>
<text x="1314" y="236" textLength="22" lengthAdjust="spacingAndGlyphs" style="fill:#f00">LMH</text>
<text x="1377" y="525" textLength="21" lengthAdjust="spacingAndGlyphs" style="fill:#ff0">YDL</text>
<text x="1344" y="597" textLength="21" lengthAdjust="spacingAndGlyphs" style="fill:#ffa500">LWL</text>
<text x="1439" y="787" style="fill:#f00">M</text>
<text x="1279" y="214" textLength="21" lengthAdjust="spacingAndGlyphs">YDC</text>
</g>
<!-- Text levels -->
<text class="j" x="1433" y="531" textLength="113" lengthAdjust="spacingAndGlyphs">買い小さめ 153.60</text>
<text class="j" x="1394" y="564" textLength="152" lengthAdjust="spacingAndGlyphs">OP19日NYカット 153.50</text>
<text class="j" x="1141" y="728" textLength="405" lengthAdjust="spacingAndGlyphs">買いやや小さめ、OP19日NYカット大きめ/OP20日NYカット 153.00</text>
<text class="j" x="1212" y="794" textLength="334" lengthAdjust="spacingAndGlyphs">買い小さめ・割り込むとストップロス売り小さめ 152.80</text>
<text x="1556" y="150" font-size="13">1</text>
<text x="1556" y="186" font-size="13">2</text>
<text x="1556" y="268" font-size="13">5</text>
<text x="18" y="14" class="a" textLength="198" lengthAdjust="spacingAndGlyphs">USDJPY,H1  155.023 155.023 155.023 155.023</text>
<text x="10" y="90" class="a" textLength="150" lengthAdjust="spacingAndGlyphs">Channel size = 1858 Slope = -23.23</text>
<text x="74" y="136" font-size="61" textLength="325" lengthAdjust="spacingAndGlyphs">USDJPY H1</text>
<text x="1773" y="15" font-size="11" textLength="96" lengthAdjust="spacingAndGlyphs">11/17 06:44 更新</text>
<text x="6" y="813" class="a" textLength="59" lengthAdjust="spacingAndGlyphs">H1  macd (12)</text>
<!-- MACD -->
<path d="M3 926.500H1874" stroke="#f00" stroke-width="1.500" fill="none"/>
<g transform="translate(0,720) scale(.61224,.33333)">
<polyline class="dt" points="5,505 20,485 45,480 90,490 125,505 145,530 190,580 215,625 255,720 285,790 320,850 345,878 380,892 400,890 435,850 470,795 510,760 540,742 575,735 615,700 650,650 690,555 730,480 790,395 820,365 855,352 910,378 960,402 1020,398 1090,415 1130,435 1190,515 1225,545 1290,575 1325,565 1385,480 1430,420 1470,378 1500,370 1568,395"/>
<polyline class="gr" points="5,402 18,403 30,432 42,465"/>
<polyline class="pk" points="42,465 60,485 75,508 95,530 110,535 125,555 135,605 150,628 165,648 180,675 195,705 215,755 225,820 240,890 255,935 268,958 285,960 295,973 320,975 332,985 348,952 370,918 382,910 398,892"/>
<polyline class="gr" points="398,892 410,840 425,785 438,750 460,680 475,667 502,710 525,680 545,705 567,727 580,710 595,658 618,622 635,560 660,465 695,385 715,365 750,325 770,293 790,278 805,278 820,287 850,328 858,345"/>
<polyline class="pk" points="858,345 880,390 905,420 920,432 940,432 958,440 975,420 995,395"/>
<polyline class="gr" points="995,393 1025,393"/>
<polyline class="pk" points="1025,393 1040,422 1065,448 1080,433 1090,433 1110,450 1128,470 1140,545 1160,585 1185,615 1220,615 1250,605 1265,617 1275,617 1295,577"/>
<polyline class="gr" points="1295,577 1325,530 1340,465 1355,425 1380,395 1405,335 1420,315 1445,307 1455,293 1468,293 1480,315 1498,355"/>
<polyline class="pk" points="1498,355 1515,390 1535,415 1550,420 1568,435"/>
</g>
<g transform="translate(960,720) scale(.61224,.33333)">
<polyline class="dt" points="0,395 30,410 80,440 125,452 150,480 200,520 235,570 270,625 310,655 370,665 415,665 490,632 530,668 555,678 620,650 690,622 730,595 790,565 840,532"/>
<polyline class="pk" points="0,435 18,458 33,438 60,483 85,487 95,467 110,467 125,490 135,530 150,565 160,575 175,575 190,593 203,597 228,693 255,735 280,735 305,703 318,698 338,668"/>
<polyline class="gr" points="338,668 348,658"/>
<polyline class="pk" points="348,658 365,668 390,665 412,672"/>
<polyline class="gr" points="412,672 435,633 450,633 475,590 488,583"/>
<polyline class="pk" points="488,583 500,690 515,735 530,735 542,725 555,688"/>
<polyline class="gr" points="555,688 570,655 590,633 605,625 635,620 660,593 675,593 698,561 712,558 735,550 750,543 770,540 790,512 815,497 830,480 842,460"/>
</g>
<!-- Bottom bar -->
<rect x="3" y="1063" width="32" height="13" fill="#8b0000"/><rect x="35" y="1063" width="40" height="13" fill="#00008b"/><rect x="75" y="1063" width="40" height="13" fill="#8b008b"/><rect x="115" y="1063" width="32" height="13" fill="#3c3c3c"/><rect x="147" y="1063" width="8" height="13" fill="#006400"/><rect x="155" y="1063" width="72" height="13" fill="#8b0000"/><rect x="227" y="1063" width="40" height="13" fill="#00008b"/><rect x="267" y="1063" width="40" height="13" fill="#8b008b"/><rect x="307" y="1063" width="32" height="13" fill="#3c3c3c"/><rect x="339" y="1063" width="8" height="13" fill="#006400"/><rect x="347" y="1063" width="16" height="13" fill="#8b0000"/>
<rect x="904" y="1064" width="62" height="12" fill="#707070"/>
<text x="133" y="1074" font-size="11" font-weight="bold" textLength="27" lengthAdjust="spacingAndGlyphs">11/17</text>
<text x="325" y="1074" font-size="11" font-weight="bold" textLength="27" lengthAdjust="spacingAndGlyphs">11/18</text>
<text x="907" y="1076" font-size="11" style="fill:#0f0" textLength="56" lengthAdjust="spacingAndGlyphs">macd OK</text>
<!-- Axis -->
<g class="a">
<rect x="1877" y="41" width="38" height="11" fill="#fff"/>
<text x="1880" y="50" style="fill:#000" textLength="32" lengthAdjust="spacingAndGlyphs">155.023</text>
<text x="1880" y="37" textLength="32" lengthAdjust="spacingAndGlyphs">155.060</text>
<text x="1880" y="70" textLength="32" lengthAdjust="spacingAndGlyphs">154.960</text>
<text x="1880" y="103" textLength="32" lengthAdjust="spacingAndGlyphs">154.860</text>
<text x="1880" y="136" textLength="32" lengthAdjust="spacingAndGlyphs">154.760</text>
<text x="1880" y="169" textLength="32" lengthAdjust="spacingAndGlyphs">154.660</text>
<text x="1880" y="202" textLength="32" lengthAdjust="spacingAndGlyphs">154.560</text>
<text x="1880" y="236" textLength="32" lengthAdjust="spacingAndGlyphs">154.460</text>
<text x="1880" y="269" textLength="32" lengthAdjust="spacingAndGlyphs">154.360</text>
<text x="1880" y="302" textLength="32" lengthAdjust="spacingAndGlyphs">154.260</text>
<text x="1880" y="335" textLength="32" lengthAdjust="spacingAndGlyphs">154.160</text>
<text x="1880" y="368" textLength="32" lengthAdjust="spacingAndGlyphs">154.060</text>
<text x="1880" y="401" textLength="32" lengthAdjust="spacingAndGlyphs">153.960</text>
<text x="1880" y="434" textLength="32" lengthAdjust="spacingAndGlyphs">153.860</text>
<text x="1880" y="467" textLength="32" lengthAdjust="spacingAndGlyphs">153.760</text>
<text x="1880" y="500" textLength="32" lengthAdjust="spacingAndGlyphs">153.660</text>
<text x="1880" y="534" textLength="32" lengthAdjust="spacingAndGlyphs">153.560</text>
<text x="1880" y="567" textLength="32" lengthAdjust="spacingAndGlyphs">153.460</text>
<text x="1880" y="600" textLength="32" lengthAdjust="spacingAndGlyphs">153.360</text>
<text x="1880" y="633" textLength="32" lengthAdjust="spacingAndGlyphs">153.260</text>
<text x="1880" y="666" textLength="32" lengthAdjust="spacingAndGlyphs">153.160</text>
<text x="1880" y="699" textLength="32" lengthAdjust="spacingAndGlyphs">153.060</text>
<text x="1880" y="732" textLength="32" lengthAdjust="spacingAndGlyphs">152.960</text>
<text x="1880" y="765" textLength="32" lengthAdjust="spacingAndGlyphs">152.860</text>
<text x="1880" y="798" textLength="32" lengthAdjust="spacingAndGlyphs">152.760</text>
<text x="1877" y="811" textLength="18" lengthAdjust="spacingAndGlyphs">0.23</text>
<rect x="1877" y="921" width="4" height="11" fill="#f00"/>
<text x="1877" y="931" textLength="18" lengthAdjust="spacingAndGlyphs">0.00</text>
<text x="1877" y="1057" textLength="26" lengthAdjust="spacingAndGlyphs">-0.245</text>
<text x="1877" y="1073" textLength="31" lengthAdjust="spacingAndGlyphs">235959</text>
</g>
<path d="M1874 33.500H1877M1874 66.500H1877M1874 99.500H1877M1874 132.500H1877M1874 165.500H1877M1874 198.500H1877M1874 232.500H1877M1874 265.500H1877M1874 298.500H1877M1874 331.500H1877M1874 364.500H1877M1874 397.500H1877M1874 430.500H1877M1874 463.500H1877M1874 496.500H1877M1874 530.500H1877M1874 563.500H1877M1874 596.500H1877M1874 629.500H1877M1874 662.500H1877M1874 695.500H1877M1874 728.500H1877M1874 761.500H1877M1874 794.500H1877" stroke="#fff" fill="none"/>
<!-- frames -->
<path d="M2.500 2.500H1874.500V1076.500H2.500ZM2.500 797.500H1874.500M2.500 799.500H1874.500M2.500 1060.500H1874.500M2.500 1063.500H1874.500" stroke="#fff" fill="none"/>
</svg>
</body></html>
